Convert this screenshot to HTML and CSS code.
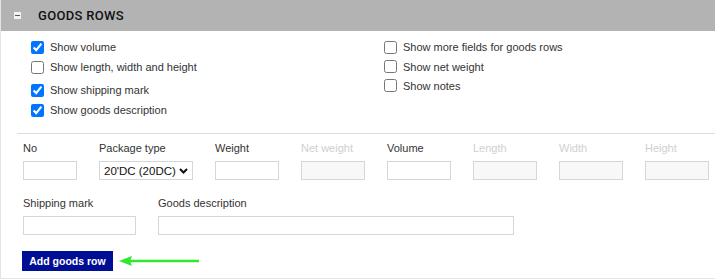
FILE: index.html
```html
<!DOCTYPE html>
<html lang="en">

<head>
    <meta charset="UTF-8">
    <title>Goods rows</title>
    <link rel="stylesheet" href="styles.css">
</head>

<body>
    <div class="panel">
        <!-- Cabeçalho do painel -->
        <div class="panel-header">
            <span class="toggle"></span>
            <h2>Goods rows</h2>
        </div>

        <!-- Opções -->
        <div class="options">
            <div class="options-col">
                <label class="check"><input type="checkbox" checked> Show volume</label>
                <label class="check"><input type="checkbox"> Show length, width and height</label>
                <label class="check spaced"><input type="checkbox" checked> Show shipping mark</label>
                <label class="check"><input type="checkbox" checked> Show goods description</label>
            </div>
            <div class="options-col">
                <label class="check"><input type="checkbox"> Show more fields for goods rows</label>
                <label class="check tight"><input type="checkbox"> Show net weight</label>
                <label class="check tight"><input type="checkbox"> Show notes</label>
            </div>
        </div>

        <!-- Campos -->
        <div class="fields">
            <div class="field-row">
                <div class="field">
                    <label>No</label>
                    <input type="text" class="w-no">
                </div>
                <div class="field">
                    <label>Package type</label>
                    <select class="w-pack">
                        <option>20'DC (20DC)</option>
                    </select>
                </div>
                <div class="field">
                    <label>Weight</label>
                    <input type="text" class="w-num">
                </div>
                <div class="field disabled">
                    <label>Net weight</label>
                    <input type="text" class="w-num" disabled>
                </div>
                <div class="field">
                    <label>Volume</label>
                    <input type="text" class="w-num">
                </div>
                <div class="field disabled">
                    <label>Length</label>
                    <input type="text" class="w-num" disabled>
                </div>
                <div class="field disabled">
                    <label>Width</label>
                    <input type="text" class="w-num" disabled>
                </div>
                <div class="field disabled">
                    <label>Height</label>
                    <input type="text" class="w-num" disabled>
                </div>
            </div>

            <div class="field-row">
                <div class="field">
                    <label>Shipping mark</label>
                    <input type="text" class="w-mark">
                </div>
                <div class="field">
                    <label>Goods description</label>
                    <input type="text" class="w-desc">
                </div>
            </div>

            <div class="actions">
                <button type="button" class="btn-add">Add goods row</button>
                <svg class="arrow" width="84" height="12" viewBox="0 0 84 12">
                    <path d="M82 6 L12 6" stroke="#2fe82f" stroke-width="2.5" fill="none"/>
                    <path d="M2 6 L15 1 L13 6 L15 11 Z" fill="#2fe82f"/>
                </svg>
            </div>
        </div>
    </div>
</body>

</html>
```

FILE: styles.css
```css
/* Reset básico */
* {
    margin: 0;
    padding: 0;
    box-sizing: border-box;
}

body {
    background-color: #fff;
    font-family: 'Liberation Sans', Arial, sans-serif;
    font-size: 11px;
    color: #333;
}

.panel {
    height: 279px;
    border-left: 1px solid #e4e4e4;
    border-bottom: 1px solid #e4e4e4;
}

/* Cabeçalho */
.panel-header {
    height: 31px;
    background-color: #b3b3b3;
    display: flex;
    align-items: center;
    padding-left: 13px;
}

.toggle {
    width: 7px;
    height: 7px;
    background-color: #f2f2f2;
    display: flex;
    align-items: center;
    justify-content: center;
    margin-right: 17px;
}

.toggle::before {
    content: '';
    width: 5px;
    height: 1px;
    background-color: #555;
}

.panel-header h2 {
    font-family: Roboto, 'Liberation Sans', sans-serif;
    font-weight: 500;
    font-size: 13px;
    letter-spacing: 0.3px;
    text-transform: uppercase;
    color: #111;
}

/* Opções */
.options {
    display: grid;
    grid-template-columns: 353px 1fr;
    padding: 6px 0 0 30px;
    height: 102px;
}

.check {
    display: flex;
    align-items: center;
    height: 20px;
    gap: 6px;
    color: #333;
}

.check input {
    width: 13px;
    height: 13px;
    margin: 0;
}

.check.spaced {
    margin-top: 3px;
}

.check.tight {
    height: 19px;
}

/* Campos */
.fields {
    margin-left: 16px;
    border-top: 1px solid #dddddd;
    padding: 7px 0 0 6px;
}

.field-row {
    display: flex;
    gap: 22px;
    margin-bottom: 16px;
}

.field label {
    display: block;
    height: 14px;
    line-height: 14px;
    margin-bottom: 6px;
}

.field.disabled label {
    color: #cfcfcf;
}

.field input,
.field select {
    display: block;
    height: 19px;
    border: 1px solid #d6d6d6;
    background-color: #fff;
    font-family: inherit;
    font-size: 11px;
    outline: none;
}

.field input:disabled {
    background-color: #f8f8f8;
}

.field select {
    appearance: none;
    padding: 0 14px 0 4px;
    color: #111;
    font-size: 11.5px;
    background-image: url("data:image/svg+xml,%3Csvg xmlns='http://www.w3.org/2000/svg' width='9' height='6' viewBox='0 0 9 6'%3E%3Cpath d='M1 1 L4.5 4.5 L8 1' stroke='%23111' stroke-width='2' fill='none'/%3E%3C/svg%3E");
    background-repeat: no-repeat;
    background-position: right 4px center;
}

.w-no { width: 54px; }
.w-pack { width: 94px; }
.w-num { width: 64px; }
.w-mark { width: 113px; }
.w-desc { width: 356px; }

.actions {
    display: flex;
    align-items: center;
    gap: 4px;
}

.btn-add {
    background-color: #000e96;
    color: #fff;
    border: none;
    height: 20px;
    width: 91px;
    margin-left: -1px;
    font-family: 'Liberation Sans', Arial, sans-serif;
    font-weight: bold;
    font-size: 10.5px;
    cursor: pointer;
}
```
